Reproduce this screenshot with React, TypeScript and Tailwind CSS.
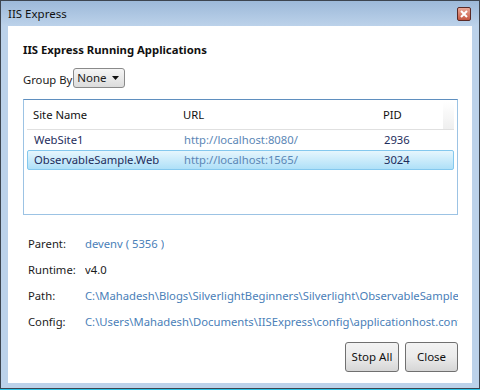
import { useState } from "react";

const FONT = { fontFamily: '"Noto Sans", "Open Sans", sans-serif' };

const apps = [
  { name: "WebSite1", url: "http://localhost:8080/", pid: "2936" },
  { name: "ObservableSample.Web", url: "http://localhost:1565/", pid: "3024" },
];

const details = [
  { label: "Parent:", value: "devenv ( 5356 )", link: true },
  { label: "Runtime:", value: "v4.0", link: false },
  { label: "Path:", value: "C:\\Mahadesh\\Blogs\\SilverlightBeginners\\Silverlight\\ObservableSample\\ObservableSample.Web", link: true },
  { label: "Config:", value: "C:\\Users\\Mahadesh\\Documents\\IISExpress\\config\\applicationhost.config", link: true },
];

function CloseBox() {
  return (
    <div className="w-[14px] h-[14px] rounded-[2px] border border-[#5a2a26] bg-gradient-to-b from-[#eaa898] to-[#c4553f] flex items-center justify-center">
      <svg width="8" height="8" viewBox="0 0 8 8">
        <path d="M1 1 L7 7 M7 1 L1 7" stroke="#fff" strokeWidth="2" />
      </svg>
    </div>
  );
}

export default function App() {
  const [selected, setSelected] = useState(1);

  return (
    <div className="w-[480px] h-[390px] flex flex-col text-[11.25px] text-[#1b1b1b]" style={FONT}>
      <div className="h-[389px] flex flex-col border border-[#3d4550] bg-[#bcd2ea]">
        {/* title bar */}
        <div className="h-[25px] shrink-0 flex items-center justify-between pl-[7px] pr-[8px] bg-gradient-to-b from-[#9db9d9] to-[#bcd2ea]">
          <span className="text-[11.5px] text-[#111] pt-[1px]">IIS Express</span>
          <CloseBox />
        </div>

        {/* client area */}
        <div className="flex-1 mx-[7px] mb-[5px] bg-white flex flex-col pl-[15px] pr-[14px] overflow-hidden">
          <div className="mt-[15px] h-[18px] flex items-center font-bold text-[11.3px] text-[#111]">
            IIS Express Running Applications
          </div>

          <div className="mt-[9px] h-[20px] flex items-center">
            <span className="mr-[1px] pt-[4px]">Group By</span>
            <button className="h-[20px] w-[52px] flex items-center justify-between pl-[3px] pr-[5px] rounded-[3px] border border-[#8a8a8a] bg-gradient-to-b from-[#f6f6f6] to-[#dcdcdc] text-[11.5px]">
              <span>None</span>
              <svg width="7" height="4" viewBox="0 0 7 4">
                <path d="M0 0 H7 L3.5 4 Z" fill="#111" />
              </svg>
            </button>
          </div>

          {/* list */}
          <div className="mt-[11px] h-[116px] shrink-0 border border-[#9cc3e4] border-t-[#5f8fbf] pt-[2px] px-[3px] flex flex-col">
            <div className="h-[28px] flex items-center border-b border-[#e0e0e0] text-[#111] relative">
              <span className="w-[156px] pl-[6px]">Site Name</span>
              <span className="w-[200px]">URL</span>
              <span>PID</span>
              <div className="absolute right-0 top-0 w-[11px] h-[27px] bg-gradient-to-b from-white to-[#efefef]" />
            </div>
            <div className="flex flex-col">
              {apps.map((a, i) => (
                <div
                  key={a.name}
                  onClick={() => setSelected(i)}
                  className={
                    "h-[20px] flex items-center rounded-[2px] border " +
                    (selected === i
                      ? "border-[#84c8ee] bg-gradient-to-b from-[#e6f6fd] to-[#aee0f8]"
                      : "border-transparent")
                  }
                >
                  <span className="w-[156px] pl-[6px] text-[#1e2d5c]">{a.name}</span>
                  <span className="w-[200px] text-[#5b87b6]">{a.url}</span>
                  <span className="text-[#1e2d5c]">{a.pid}</span>
                </div>
              ))}
            </div>
          </div>

          {/* details */}
          <div className="mt-[16px] flex flex-col pl-[5px]">
            {details.map(d => (
              <div key={d.label} className="h-[26px] flex items-center">
                <span className="w-[57px] shrink-0">{d.label}</span>
                <span className={"whitespace-nowrap overflow-hidden " + (d.link ? "text-[#4a80b8]" : "text-[#1b1b1b]")}>
                  {d.value}
                </span>
              </div>
            ))}
          </div>

          <div className="mt-[7px] flex justify-end gap-[6px]">
            <button className="w-[54px] h-[30px] rounded-[3px] border border-[#707070] bg-gradient-to-b from-[#f3f3f3] via-[#ebebeb] to-[#d6d6d6] text-[11.5px] text-[#111]">
              Stop All
            </button>
            <button className="w-[53px] h-[30px] rounded-[3px] border border-[#707070] bg-gradient-to-b from-[#f3f3f3] via-[#ebebeb] to-[#d6d6d6] text-[11.5px] text-[#111]">
              Close
            </button>
          </div>
        </div>
      </div>
      <div className="h-[1px] bg-[#29c4e8]" />
    </div>
  );
}
